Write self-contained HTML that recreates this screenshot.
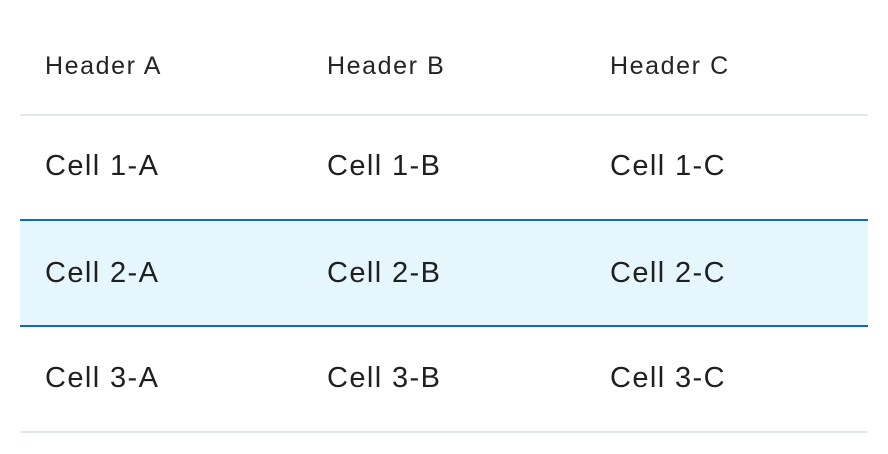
<!DOCTYPE html>
<html><head><style>
body{margin:0;width:888px;height:454px;background:#fff;font-family:"Liberation Sans",sans-serif;color:#1f1f1f;position:relative;overflow:hidden}
.l{position:absolute;left:20px;width:848px;height:2px}
.t{position:absolute;white-space:nowrap;line-height:1}
.h{font-size:25px;color:#242424;letter-spacing:1.6px}
.c{font-size:29px;letter-spacing:1.4px}
</style></head><body>
<div style="position:absolute;left:20px;top:221px;width:848px;height:105px;background:#e6f6fd"></div>
<div class="l" style="top:114px;background:#e3e6ec"></div>
<div class="l" style="top:219px;background:#0f6cbd"></div>
<div class="l" style="top:325px;background:#0f6cbd"></div>
<div class="l" style="top:431px;background:#e3e6ec"></div>

<div class="t h" style="left:45px;top:54px">Header A</div>
<div class="t h" style="left:327px;top:54px">Header B</div>
<div class="t h" style="left:610px;top:54px">Header C</div>

<div class="t c" style="left:45px;top:152px">Cell 1-A</div>
<div class="t c" style="left:327px;top:152px">Cell 1-B</div>
<div class="t c" style="left:610px;top:152px">Cell 1-C</div>

<div class="t c" style="left:45px;top:259px">Cell 2-A</div>
<div class="t c" style="left:327px;top:259px">Cell 2-B</div>
<div class="t c" style="left:610px;top:259px">Cell 2-C</div>

<div class="t c" style="left:45px;top:364px">Cell 3-A</div>
<div class="t c" style="left:327px;top:364px">Cell 3-B</div>
<div class="t c" style="left:610px;top:364px">Cell 3-C</div>
</body></html>
